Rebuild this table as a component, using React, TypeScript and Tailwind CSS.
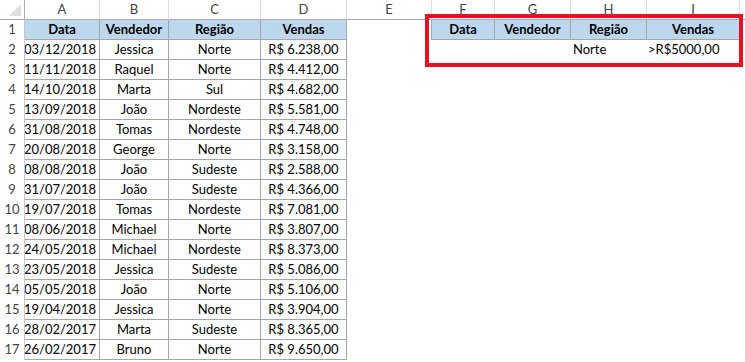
import React from "react";

const LETTERS = ["A", "B", "C", "D", "E", "F", "G", "H", "I"];

const DADOS: [string, string, string, string][] = [
  ["03/12/2018", "Jessica", "Norte", "R$ 6.238,00"],
  ["11/11/2018", "Raquel", "Norte", "R$ 4.412,00"],
  ["14/10/2018", "Marta", "Sul", "R$ 4.682,00"],
  ["13/09/2018", "João", "Nordeste", "R$ 5.581,00"],
  ["31/08/2018", "Tomas", "Nordeste", "R$ 4.748,00"],
  ["20/08/2018", "George", "Norte", "R$ 3.158,00"],
  ["08/08/2018", "João", "Sudeste", "R$ 2.588,00"],
  ["31/07/2018", "João", "Sudeste", "R$ 4.366,00"],
  ["19/07/2018", "Tomas", "Nordeste", "R$ 7.081,00"],
  ["08/06/2018", "Michael", "Norte", "R$ 3.807,00"],
  ["24/05/2018", "Michael", "Nordeste", "R$ 8.373,00"],
  ["23/05/2018", "Jessica", "Sudeste", "R$ 5.086,00"],
  ["05/05/2018", "João", "Norte", "R$ 5.106,00"],
  ["19/04/2018", "Jessica", "Norte", "R$ 3.904,00"],
  ["28/02/2017", "Marta", "Sudeste", "R$ 8.365,00"],
  ["26/02/2017", "Bruno", "Norte", "R$ 9.650,00"],
];

const HEADERS = ["Data", "Vendedor", "Região", "Vendas"];

const cell = "flex items-center overflow-hidden whitespace-nowrap";
const tableCell = `${cell} border-r border-b border-[#a6a6a6]`;
const headCell = `${tableCell} bg-[#bdd7ee] font-bold justify-center`;

export default function App() {
  const rows: React.ReactNode[] = [];

  // linha 1: cabeçalhos
  rows.push(
    <React.Fragment key="r1">
      <div className={`${cell} justify-center border-r border-[#c8c8c8] text-[#444]`}>1</div>
      {HEADERS.map((h) => (
        <div key={h} className={headCell}>{h}</div>
      ))}
      <div className={`${cell} border-r border-[#a6a6a6]`} />
      {HEADERS.map((h) => (
        <div key={"c" + h} className={headCell}>{h}</div>
      ))}
      <div />
    </React.Fragment>
  );

  DADOS.forEach((d, i) => {
    const n = i + 2;
    rows.push(
      <React.Fragment key={"r" + n}>
        <div className={`${cell} justify-center border-r border-[#c8c8c8] text-[#444]`}>{n}</div>
        <div className={`${tableCell} justify-end pr-[3px]`}>{d[0]}</div>
        <div className={`${tableCell} justify-center`}>{d[1]}</div>
        <div className={`${tableCell} justify-center`}>{d[2]}</div>
        <div className={`${tableCell} justify-center`}>{d[3]}</div>
        <div />
        <div />
        <div />
        <div className={`${cell} pl-[2px]`}>{n === 2 ? "Norte" : ""}</div>
        <div className={`${cell} pl-[1px]`}>{n === 2 ? ">R$5000,00" : ""}</div>
        <div />
      </React.Fragment>
    );
  });

  return (
    <div className="relative w-[745px] h-[362px] overflow-hidden bg-white text-black text-[13px] font-['Lato','Liberation_Sans',sans-serif]">
      <div className="grid grid-cols-[25px_75px_69px_92px_86px_85px_63px_76px_76px_93px_1fr] auto-rows-[20px]">
        {/* cabeçalho de colunas */}
        <div className="relative border-r border-b border-[#ababab]">
          <svg className="absolute right-[3px] bottom-[3px]" width="12" height="12" viewBox="0 0 12 12">
            <polygon points="12,0 12,12 0,12" fill="#dfdfdf" />
          </svg>
        </div>
        {LETTERS.map((l) => (
          <div key={l} className={`${cell} justify-center border-r border-b border-r-[#dcdcdc] border-b-[#ababab] text-[#444]`}>
            {l}
          </div>
        ))}
        <div className="border-b border-[#ababab]" />
        {rows}
      </div>

      {/* destaque da área de critérios */}
      <div className="absolute left-[425px] top-[14px] w-[318px] h-[53px] border-4 border-[#e81123]" />
    </div>
  );
}
